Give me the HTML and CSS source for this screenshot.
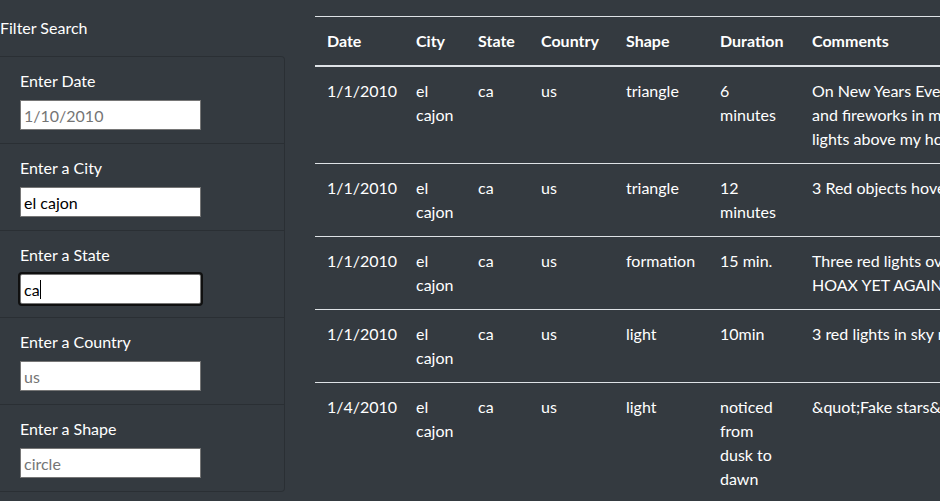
FILE: index.html
```html
<!DOCTYPE html>
<html>
<head>
<meta charset="utf-8">
<link rel="stylesheet" href="styles.css">
</head>
<body>
<div class="page">
  <aside class="sidebar">
    <div class="filter-title">Filter Search</div>
    <ul class="filters">
      <li class="filter-item">
        <label class="filter-label">Enter Date</label>
        <input class="filter-input" type="text" placeholder="1/10/2010">
      </li>
      <li class="filter-item">
        <label class="filter-label">Enter a City</label>
        <input class="filter-input" type="text" value="el cajon">
      </li>
      <li class="filter-item">
        <label class="filter-label">Enter a State</label>
        <span class="input-wrap"><input class="filter-input focused" type="text" value="ca"><span class="caret"></span></span>
      </li>
      <li class="filter-item">
        <label class="filter-label">Enter a Country</label>
        <input class="filter-input" type="text" placeholder="us">
      </li>
      <li class="filter-item">
        <label class="filter-label">Enter a Shape</label>
        <input class="filter-input" type="text" placeholder="circle">
      </li>
    </ul>
  </aside>
  <main class="results">
    <table class="ufo-table">
      <colgroup>
        <col class="c-date"><col class="c-city"><col class="c-state"><col class="c-country"><col class="c-shape"><col class="c-duration"><col class="c-comments">
      </colgroup>
      <thead>
        <tr><th>Date</th><th>City</th><th>State</th><th>Country</th><th>Shape</th><th>Duration</th><th>Comments</th></tr>
      </thead>
      <tbody>
        <tr><td>1/1/2010</td><td>el cajon</td><td>ca</td><td>us</td><td>triangle</td><td>6 minutes</td><td class="comment">On New Years Eve we were outside at midnight watching<br>and fireworks in my neighborhood going off when I saw three red<br>lights above my house moving slowly toward the east.</td></tr>
        <tr><td>1/1/2010</td><td>el cajon</td><td>ca</td><td>us</td><td>triangle</td><td>12 minutes</td><td class="comment">3 Red objects hovering over El Cajon in a triangle shape</td></tr>
        <tr><td>1/1/2010</td><td>el cajon</td><td>ca</td><td>us</td><td>formation</td><td>15 min.</td><td class="comment">Three red lights over El Cajon in formation. ANOTHER<br>HOAX YET AGAIN&amp;#33;</td></tr>
        <tr><td>1/1/2010</td><td>el cajon</td><td>ca</td><td>us</td><td>light</td><td>10min</td><td class="comment">3 red lights in sky moving slowly west</td></tr>
        <tr><td>1/4/2010</td><td>el cajon</td><td>ca</td><td>us</td><td>light</td><td>noticed from dusk to dawn</td><td class="comment">&amp;quot;Fake stars&amp;quot; seen every night in the western sky</td></tr>
      </tbody>
    </table>
  </main>
</div>
</body>
</html>
```
FILE: styles.css
```css
html, body {
  margin: 0;
  padding: 0;
  background: #343a40;
  color: #fff;
  font-family: Lato, "Noto Sans", sans-serif;
  font-size: 16px;
  line-height: 24px;
  overflow: hidden;
}
.page {
  display: flex;
  gap: 30px;
  height: 501px;
  overflow: hidden;
}
.sidebar {
  flex: 0 0 285px;
  padding-top: 16px;
}
.filter-title {
  line-height: 24px;
  margin-bottom: 16px;
}
.filters {
  list-style: none;
  margin: 0;
  padding: 0;
  border: 1px solid rgba(0, 0, 0, 0.18);
  border-left: 0;
  border-radius: 0 4px 4px 0;
}
.filter-item {
  display: flex;
  flex-direction: column;
  align-items: flex-start;
  padding: 12px 20px 12px;
  height: 62px;
}
.filter-item + .filter-item {
  border-top: 1px solid rgba(0, 0, 0, 0.18);
}
.filter-label {
  line-height: 24px;
  margin-bottom: 7px;
}
.input-wrap {
  position: relative;
  display: block;
}
.filter-input {
  box-sizing: border-box;
  width: 181px;
  height: 30px;
  margin: 0;
  padding: 1px 3px;
  border: 1px solid #767676;
  background: #fff;
  color: #000;
  font-family: inherit;
  font-size: 16px;
  outline: none;
}
.filter-input::placeholder {
  color: #757575;
}
.filter-input.focused {
  outline: 2px solid #101010;
  outline-offset: 0;
  border-radius: 2px;
}
.caret {
  position: absolute;
  left: 20px;
  top: 6px;
  width: 1px;
  height: 19px;
  background: #000;
}
.results {
  flex: 1 1 auto;
  padding-top: 16px;
  overflow: hidden;
}
.ufo-table {
  table-layout: fixed;
  width: 1200px;
  border-collapse: collapse;
  border-top: 1px solid #dee2e6;
}
.c-date { width: 89px; }
.c-city { width: 62px; }
.c-state { width: 63px; }
.c-country { width: 85px; }
.c-shape { width: 94px; }
.c-duration { width: 92px; }
.c-comments { width: 715px; }
.ufo-table th,
.ufo-table td {
  padding: 12px;
  text-align: left;
  vertical-align: top;
}
.ufo-table th {
  font-weight: 700;
  border-bottom: 2px solid #dee2e6;
}
.ufo-table tbody tr + tr td {
  border-top: 1px solid #dee2e6;
}
.ufo-table td.comment {
  white-space: nowrap;
}
```
